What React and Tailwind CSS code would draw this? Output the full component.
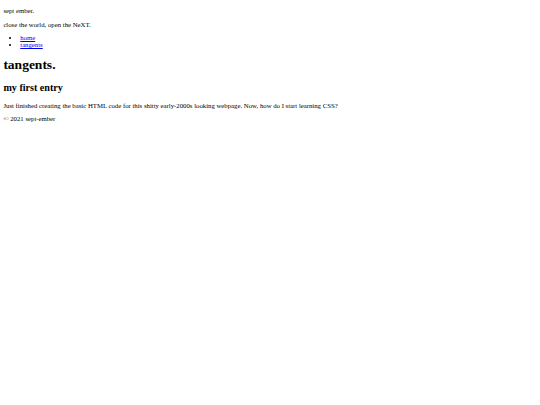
export default function App() {
  const p = "my-[6.75px]";
  const link = "text-[#0000ee] underline";

  return (
    <div className="m-[3.375px] bg-white font-['Liberation_Serif',serif] text-[6.75px] leading-[normal] text-black">
      <header>
        <p className={p}>sept ember.</p>
        <p className={p}>close the world, open the NeXT.</p>
        <nav>
          <ul className="my-[6.75px] list-disc pl-[16.875px]">
            <li>
              <a href="#" className={link}>
                home
              </a>
            </li>
            <li>
              <a href="#" className={link}>
                tangents
              </a>
            </li>
          </ul>
        </nav>
      </header>

      <main>
        <h1 className="my-[9.045px] text-[13.5px] font-bold leading-[normal]">tangents.</h1>
        <article>
          <h2 className="my-[8.4px] text-[10.125px] font-bold leading-[normal]">my first entry</h2>
          <p className={p}>
            Just finished creating the basic HTML code for this shitty early-2000s looking webpage. Now, how do I start
            learning CSS?
          </p>
        </article>
      </main>

      <footer>
        <p className={p}>© 2021 sept-ember</p>
      </footer>
    </div>
  );
}
